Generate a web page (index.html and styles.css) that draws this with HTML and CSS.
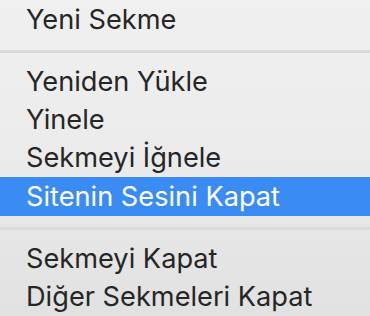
FILE: index.html
```html
<!DOCTYPE html>
<html lang="tr">
<head>
<meta charset="utf-8">
<link rel="stylesheet" href="styles.css">
</head>
<body>
<div class="menu">
  <div class="item">Yeni Sekme</div>
  <div class="sep"></div>
  <div class="item">Yeniden Yükle</div>
  <div class="item">Yinele</div>
  <div class="item">Sekmeyi İğnele</div>
  <div class="item active">Sitenin Sesini Kapat</div>
  <div class="sep"></div>
  <div class="item">Sekmeyi Kapat</div>
  <div class="item">Diğer Sekmeleri Kapat</div>
</div>
</body>
</html>
```

FILE: styles.css
```css
html, body {
  margin: 0;
  padding: 0;
}
body {
  width: 370px;
  height: 316px;
  overflow: hidden;
  background: #e2e2e2;
}
.menu {
  width: 370px;
  height: 316px;
  padding-top: 1px;
  box-sizing: border-box;
  background: linear-gradient(to bottom, #f0f0f0 0%, #ebebeb 50%, #e1e1e1 100%);
  font-family: "Inter", "Roboto", sans-serif;
  font-size: 27.2px;
  color: #262626;
  display: flex;
  flex-direction: column;
}
.item {
  height: 38px;
  line-height: 38px;
  padding-left: 26px;
  white-space: nowrap;
}
.item.active {
  height: 39px;
  line-height: 39px;
  background: #3a8cf4;
  color: #ffffff;
}
.sep {
  height: 24px;
  display: flex;
  align-items: center;
}
.sep::before {
  content: "";
  display: block;
  width: 100%;
  height: 3px;
  background: #dadada;
}
```
